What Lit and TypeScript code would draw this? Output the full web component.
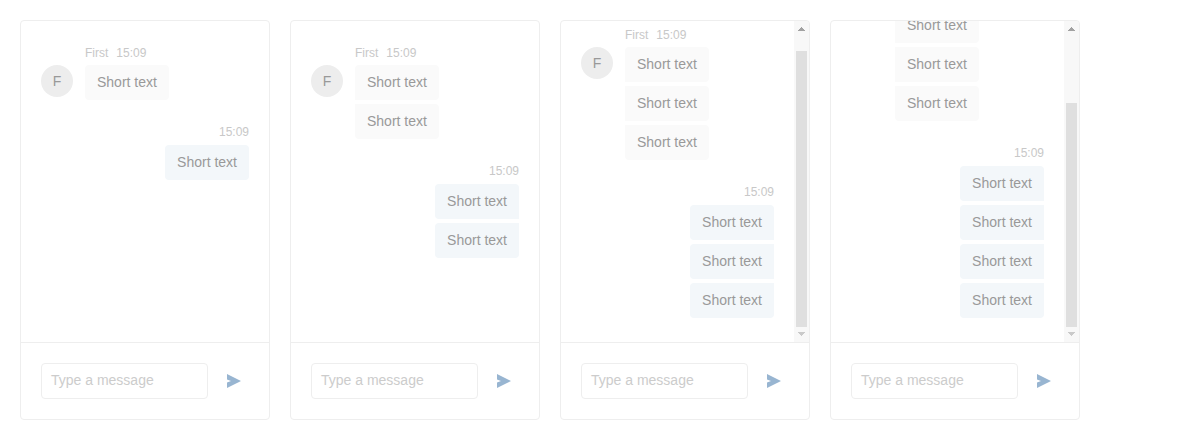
import { LitElement, html, css } from "lit";
import { customElement, property } from "lit/decorators.js";
import { classMap } from "lit/directives/class-map.js";

interface ChatData {
  count: number;
  thumbTop?: number;
  thumbHeight?: number;
}

@customElement("chat-scrollbar")
class ChatScrollbar extends LitElement {
  @property({ type: Number }) top = 0;
  @property({ type: Number }) size = 0;

  static styles = css`
    :host { display: flex; flex-direction: column; width: 15px; flex: none; background: #f8f8f8; }
    .arrow { display: block; width: 15px; height: 15px; flex: none; }
    .track { flex: 1; padding: 0 2px; }
    .thumb { background: #dfdfdf; }
  `;

  render() {
    return html`
      <svg class="arrow" viewBox="0 0 15 15" shape-rendering="crispEdges">
        <path fill="#a2a2a2" d="M7 6h1v1h1v1h1v1h1v1H4V9h1V8h1V7h1z"></path>
      </svg>
      <div class="track">
        <div class="thumb" style="margin-top:${this.top}px;height:${this.size}px"></div>
      </div>
      <svg class="arrow" viewBox="0 0 15 15" shape-rendering="crispEdges">
        <path fill="#cacaca" d="M4 5h7v1h-1v1H9v1H8v1H7V8H6V7H5V6H4z"></path>
      </svg>
    `;
  }
}

@customElement("chat-card")
class ChatCard extends LitElement {
  @property({ attribute: false }) data: ChatData = { count: 1 };

  static styles = css`
    :host {
      display: flex; flex-direction: column; box-sizing: border-box;
      width: 250px; height: 400px; border: 1px solid #eee; border-radius: 4px;
      overflow: hidden; background: #fff;
      font-family: "Liberation Sans", Arial, sans-serif; font-size: 14px; color: #999;
    }
    .view { display: flex; height: 321px; flex: none; overflow: hidden; }
    .list {
      display: flex; flex-direction: column; flex: 1; box-sizing: border-box;
      padding: 24px 20px; gap: 25px; overflow: hidden;
    }
    .list.end { justify-content: flex-end; }
    .group { display: flex; flex: none; gap: 12px; }
    .own { justify-content: flex-end; }
    .avatar {
      width: 32px; height: 32px; margin-top: 20px; border-radius: 50%;
      background: #ededed; line-height: 32px; text-align: center;
    }
    .body { display: flex; flex-direction: column; gap: 4px; align-items: flex-start; }
    .own .body { align-items: flex-end; }
    .meta { display: flex; gap: 8px; height: 16px; line-height: 16px; font-size: 12px; color: #c8c8c8; }
    .own .meta { line-height: 14px; }
    .bubble {
      box-sizing: border-box; height: 35px; padding: 0 12px; line-height: 35px;
      background: #fafafa; border-radius: 0 4px 4px 0; white-space: nowrap;
    }
    .bubble.first { border-top-left-radius: 4px; }
    .bubble.last { border-bottom-left-radius: 4px; }
    .own .bubble { background: #f3f7fa; border-radius: 4px 0 0 4px; }
    .own .bubble.first { border-top-right-radius: 4px; }
    .own .bubble.last { border-bottom-right-radius: 4px; }
    .footer {
      display: flex; flex: 1; align-items: center; box-sizing: border-box;
      padding: 0 20px; gap: 10px; border-top: 1px solid #eee;
    }
    .input {
      box-sizing: border-box; width: 167px; height: 36px; padding: 0 9px; flex: none;
      border: 1px solid #eee; border-radius: 4px; line-height: 33px; color: #ccc;
    }
    .send { display: block; width: 31px; height: 36px; flex: none; }
  `;

  private bubbles() {
    const { count } = this.data;
    return Array.from({ length: count }, (_, i) => html`
      <div class=${classMap({ bubble: true, first: i === 0, last: i === count - 1 })}>Short text</div>
    `);
  }

  render() {
    const scrolled = this.data.thumbHeight !== undefined;
    return html`
      <div class="view">
        <div class=${classMap({ list: true, end: scrolled })}>
          <div class="group">
            <div class="avatar">F</div>
            <div class="body">
              <div class="meta"><span>First</span><span>15:09</span></div>
              ${this.bubbles()}
            </div>
          </div>
          <div class="group own">
            <div class="body">
              <div class="meta"><span>15:09</span></div>
              ${this.bubbles()}
            </div>
          </div>
        </div>
        ${scrolled
          ? html`<chat-scrollbar .top=${this.data.thumbTop ?? 0} .size=${this.data.thumbHeight ?? 0}></chat-scrollbar>`
          : null}
      </div>
      <div class="footer">
        <div class="input">Type a message</div>
        <svg class="send" viewBox="0 0 31 36">
          <path fill="#98b5d1" d="M9 11L23 18L9 25V19.6L13 18L9 16.4Z"></path>
        </svg>
      </div>
    `;
  }
}

@customElement("app-root")
class AppRoot extends LitElement {
  static styles = css`
    :host { display: flex; gap: 20px; box-sizing: border-box; height: 440px; padding: 20px; background: #fff; }
    chat-card { flex: none; }
  `;

  private chats: ChatData[] = [
    { count: 1 },
    { count: 2 },
    { count: 3, thumbTop: 15, thumbHeight: 276 },
    { count: 4, thumbTop: 67, thumbHeight: 224 },
  ];

  render() {
    return this.chats.map((chat) => html`<chat-card .data=${chat}></chat-card>`);
  }
}
